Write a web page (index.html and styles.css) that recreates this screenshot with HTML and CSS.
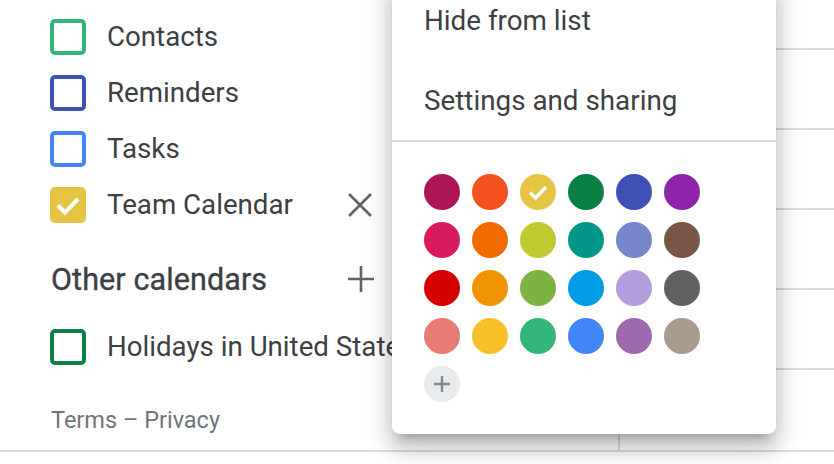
FILE: index.html
```html
<!DOCTYPE html>
<html>
<head>
<meta charset="utf-8">
<link rel="stylesheet" href="styles.css">
</head>
<body>
<div class="app">
  <aside class="sidebar">
    <ul class="cal-list">
      <li class="cal-row"><span class="cb cb-sage"></span><span class="cal-name">Contacts</span></li>
      <li class="cal-row"><span class="cb cb-blueberry"></span><span class="cal-name">Reminders</span></li>
      <li class="cal-row"><span class="cb cb-cobalt"></span><span class="cal-name">Tasks</span></li>
      <li class="cal-row has-action"><span class="cb cb-citron"><svg viewBox="0 0 36 36" width="36" height="36"><polyline points="8,18.5 15,25.5 28,12" fill="none" stroke="#fff" stroke-width="4.2"/></svg></span><span class="cal-name">Team Calendar</span>
        <span class="row-icon"><svg viewBox="0 0 26 26" width="26" height="26"><path d="M2 2 L24 24 M24 2 L2 24" stroke="#5f6368" stroke-width="2.6" fill="none"/></svg></span>
      </li>
    </ul>
    <div class="section-head">
      <span class="section-title">Other calendars</span>
      <span class="row-icon"><svg viewBox="0 0 28 28" width="28" height="28"><path d="M14 1 V27 M1 14 H27" stroke="#5f6368" stroke-width="2.6" fill="none"/></svg></span>
    </div>
    <ul class="cal-list">
      <li class="cal-row"><span class="cb cb-basil"></span><span class="cal-name">Holidays in United States</span></li>
    </ul>
    <div class="footer">Terms – Privacy</div>
  </aside>
  <main class="grid">
    <div class="grid-row first"></div>
    <div class="grid-row"></div>
    <div class="grid-row"></div>
    <div class="grid-row"></div>
    <div class="grid-row"></div>
    <div class="grid-row last"></div>
  </main>
  <div class="menu">
    <div class="menu-item">Hide from list</div>
    <div class="menu-item">Settings and sharing</div>
    <div class="menu-divider"></div>
    <div class="swatches">
      <span class="sw" style="background:#ad1457"></span>
      <span class="sw" style="background:#f4511e"></span>
      <span class="sw" style="background:#e4c441"><svg viewBox="0 0 36 36" width="36" height="36"><polyline points="10,18.5 15.5,24 26,13" fill="none" stroke="#fff" stroke-width="3.6"/></svg></span>
      <span class="sw" style="background:#0b8043"></span>
      <span class="sw" style="background:#3f51b5"></span>
      <span class="sw" style="background:#8e24aa"></span>
      <span class="sw" style="background:#d81b60"></span>
      <span class="sw" style="background:#ef6c00"></span>
      <span class="sw" style="background:#c0ca33"></span>
      <span class="sw" style="background:#009688"></span>
      <span class="sw" style="background:#7986cb"></span>
      <span class="sw" style="background:#795548"></span>
      <span class="sw" style="background:#d50000"></span>
      <span class="sw" style="background:#f09300"></span>
      <span class="sw" style="background:#7cb342"></span>
      <span class="sw" style="background:#039be5"></span>
      <span class="sw" style="background:#b39ddb"></span>
      <span class="sw" style="background:#616161"></span>
      <span class="sw" style="background:#e67c73"></span>
      <span class="sw" style="background:#f6bf26"></span>
      <span class="sw" style="background:#33b679"></span>
      <span class="sw" style="background:#4285f4"></span>
      <span class="sw" style="background:#9e69af"></span>
      <span class="sw" style="background:#a79b8e"></span>
      <span class="sw sw-add"><svg viewBox="0 0 36 36" width="36" height="36"><path d="M18 10 V26 M10 18 H26" stroke="#80868b" stroke-width="2.4" fill="none"/></svg></span>
    </div>
  </div>
</div>
</body>
</html>
```

FILE: styles.css
```css
* { box-sizing: border-box; }
html, body { margin: 0; padding: 0; background: #fff; }
body {
  width: 834px;
  height: 464px;
  overflow: hidden;
  font-family: Roboto, "Liberation Sans", sans-serif;
  color: #3c4043;
}
.app {
  position: relative;
  display: flex;
  height: 452px;
  border-bottom: 2px solid #dadce0;
}
.sidebar {
  width: 618px;
  flex: none;
  padding-top: 9px;
  overflow: hidden;
}
.cal-list {
  list-style: none;
  margin: 0;
  padding: 0;
}
.cal-row {
  display: flex;
  align-items: center;
  height: 56px;
  padding-left: 50px;
  white-space: nowrap;
}
.cal-row.has-action { width: 373px; }
.cb {
  width: 36px;
  height: 36px;
  flex: none;
  border: 4px solid;
  border-radius: 5px;
  display: flex;
  align-items: center;
  justify-content: center;
}
.cb svg { flex: none; }
.cb-sage { border-color: #33b679; }
.cb-blueberry { border-color: #3f51b5; }
.cb-cobalt { border-color: #4285f4; }
.cb-basil { border-color: #0b8043; }
.cb-citron { border-color: #e4c441; background: #e4c441; }
.cal-name {
  margin-left: 21px;
  font-size: 27.7px;
  line-height: 32px;
}
.row-icon {
  margin-left: auto;
  display: flex;
  flex: none;
}
.section-head {
  display: flex;
  align-items: center;
  width: 375px;
  height: 64px;
  margin-top: 14px;
  margin-bottom: 8px;
  padding-left: 51px;
}
.section-title {
  font-size: 30.5px;
  font-weight: 400;
  letter-spacing: 0.1px;
  -webkit-text-stroke: 0.35px #3c4043;
}
.footer {
  padding-left: 51px;
  margin-top: 31px;
  font-size: 23.5px;
  color: #70757a;
}
.grid {
  flex: 1;
  border-left: 2px solid #dadce0;
  display: flex;
  flex-direction: column;
}
.grid-row {
  height: 80px;
  flex: none;
  border-bottom: 2px solid #dadce0;
}
.grid-row.first { height: 50px; }
.grid-row.last { border-bottom: none; flex: 1; }
.menu {
  position: absolute;
  left: 392px;
  top: -20px;
  width: 384px;
  background: #fff;
  border-radius: 0 0 8px 8px;
  box-shadow: 0 16px 20px 2px rgba(0,0,0,.14), 0 6px 28px 4px rgba(0,0,0,.12), 0 10px 10px -6px rgba(0,0,0,.2);
}
.menu-item {
  height: 80px;
  display: flex;
  align-items: center;
  padding-left: 32px;
  font-size: 27.8px;
}
.menu-divider {
  height: 2px;
  background: #dadce0;
}
.swatches {
  display: grid;
  grid-template-columns: repeat(6, 36px);
  gap: 12px;
  padding: 32px;
}
.sw {
  width: 36px;
  height: 36px;
  border-radius: 50%;
  display: flex;
  align-items: center;
  justify-content: center;
}
.sw-add { background: #e8eaed; }
```
